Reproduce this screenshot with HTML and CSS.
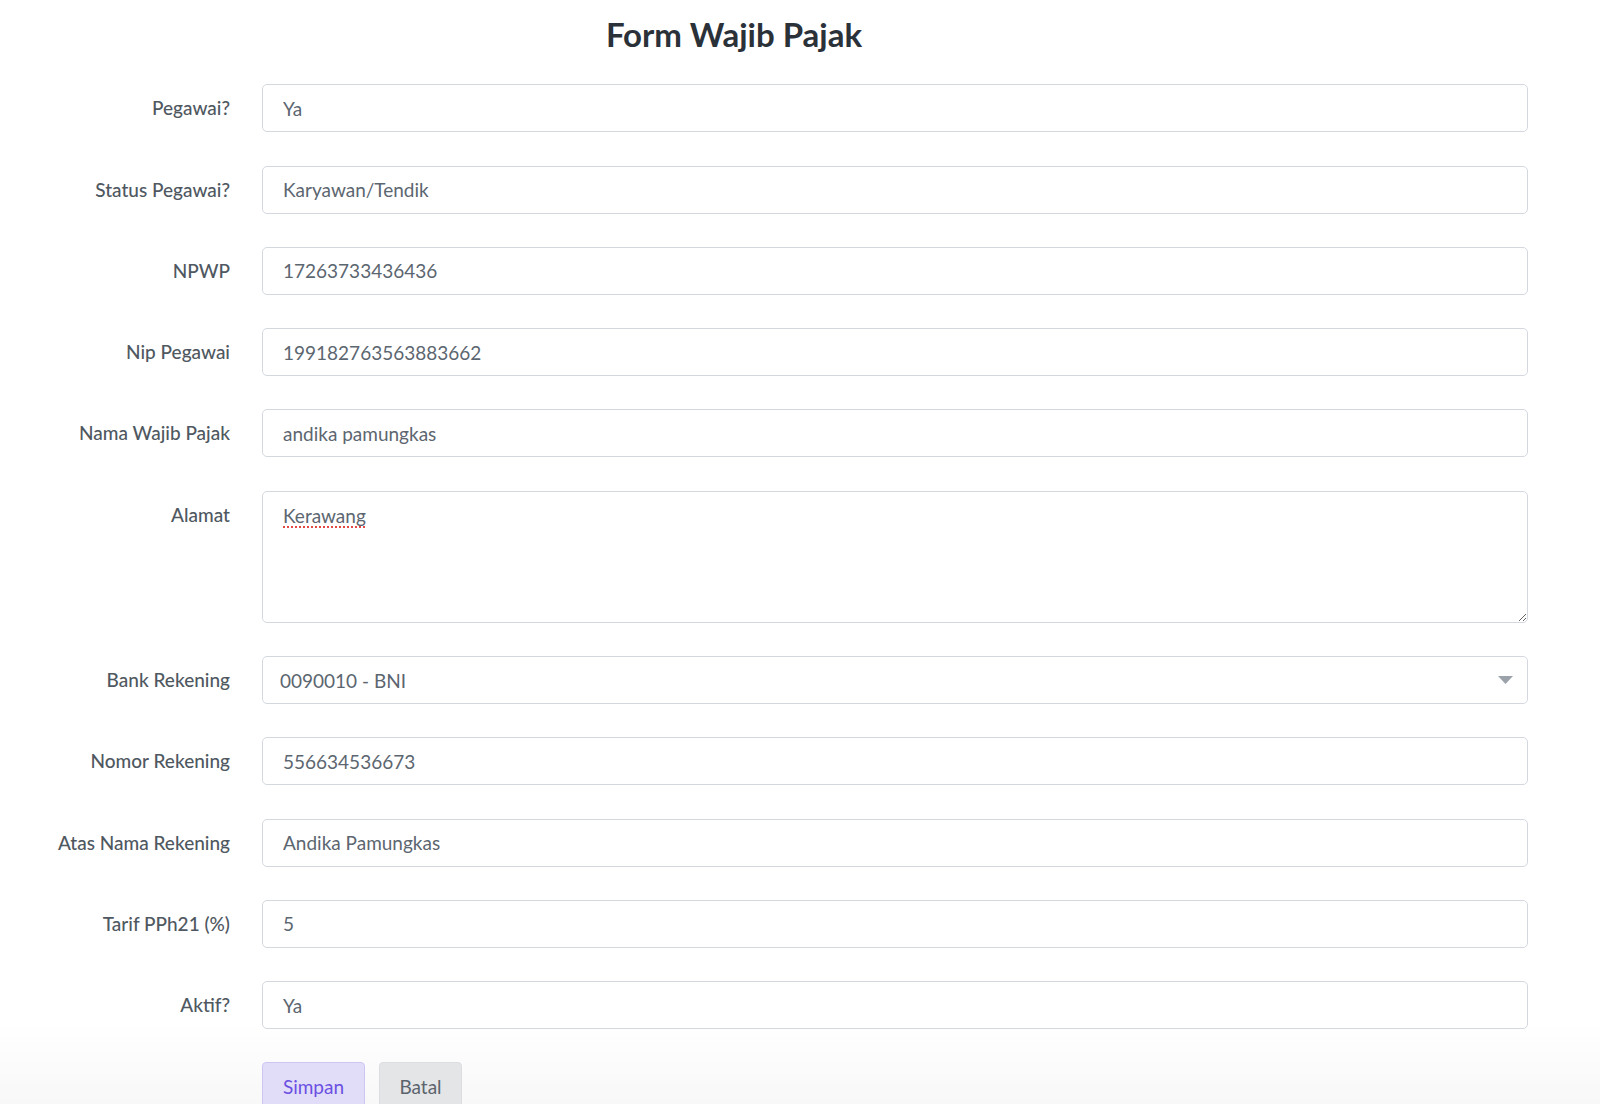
FILE: index.html
```html
<!DOCTYPE html>
<html lang="id">
<head>
    <meta charset="UTF-8">
    <meta name="viewport" content="width=device-width, initial-scale=1.0">
    <title>Form Wajib Pajak</title>
    <link rel="stylesheet" href="styles.css">
</head>
<body>
    <div class="page">
        <h1 class="page-title">Form Wajib Pajak</h1>

        <form class="tax-form">
            <label class="field-label" for="pegawai">Pegawai?</label>
            <input class="field-input" type="text" id="pegawai" value="Ya">

            <label class="field-label" for="statusPegawai">Status Pegawai?</label>
            <input class="field-input" type="text" id="statusPegawai" value="Karyawan/Tendik">

            <label class="field-label" for="npwp">NPWP</label>
            <input class="field-input" type="text" id="npwp" value="17263733436436">

            <label class="field-label" for="nip">Nip Pegawai</label>
            <input class="field-input" type="text" id="nip" value="199182763563883662">

            <label class="field-label" for="nama">Nama Wajib Pajak</label>
            <input class="field-input" type="text" id="nama" value="andika pamungkas">

            <label class="field-label" for="alamat">Alamat</label>
            <textarea class="field-input field-textarea" id="alamat">Kerawang</textarea>

            <label class="field-label" for="bank">Bank Rekening</label>
            <div class="select-wrap">
                <select class="field-input field-select" id="bank">
                    <option>0090010 - BNI</option>
                </select>
                <svg class="select-arrow" width="15" height="8" viewBox="0 0 15 8">
                    <path d="M0 0 L15 0 L7.5 8 Z" fill="#9ca2aa"/>
                </svg>
            </div>

            <label class="field-label" for="nomorRekening">Nomor Rekening</label>
            <input class="field-input" type="text" id="nomorRekening" value="556634536673">

            <label class="field-label" for="atasNama">Atas Nama Rekening</label>
            <input class="field-input" type="text" id="atasNama" value="Andika Pamungkas">

            <label class="field-label" for="tarif">Tarif PPh21 (%)</label>
            <input class="field-input" type="text" id="tarif" value="5">

            <label class="field-label" for="aktif">Aktif?</label>
            <input class="field-input" type="text" id="aktif" value="Ya">
        </form>

        <div class="form-actions">
            <button type="button" class="btn btn-save">Simpan</button>
            <button type="button" class="btn btn-cancel">Batal</button>
        </div>
    </div>
</body>
</html>
```

FILE: styles.css
```css
body {
    margin: 0;
    padding: 0;
    font-family: Lato, "Noto Sans", sans-serif;
    background-color: #ffffff;
    color: #545d66;
}

.page {
    height: 1120px;
    overflow: hidden;
}

.page-title {
    margin: 0;
    padding: 14px 132px 0 0;
    font-size: 33px;
    line-height: 40px;
    font-weight: 700;
    text-align: center;
    color: #2b3139;
}

.tax-form {
    position: relative;
    z-index: 1;
    display: grid;
    grid-template-columns: 230px 1fr;
    column-gap: 32px;
    row-gap: 33.3px;
    padding: 30.3px 72px 0 0;
}

.field-label {
    line-height: 48px;
    font-size: 19px;
    font-weight: 500;
    text-align: right;
    color: #4f5861;
}

.field-input {
    box-sizing: border-box;
    width: 100%;
    height: 48px;
    margin: 0;
    padding: 0 20px;
    border: 1px solid #d4d8de;
    border-radius: 5px;
    background-color: #ffffff;
    font-family: Lato, "Noto Sans", sans-serif;
    font-size: 19px;
    color: #5c6670;
    outline: none;
}

.field-textarea {
    height: 132px;
    padding: 11px 20px;
    line-height: 26px;
    resize: vertical;
    text-decoration: underline dotted #e4403c;
    text-underline-offset: 4px;
}

.select-wrap {
    position: relative;
}

.field-select {
    padding: 0 17px;
    -webkit-appearance: none;
    appearance: none;
}

.select-arrow {
    position: absolute;
    right: 15px;
    top: 20px;
}

.form-actions {
    display: flex;
    gap: 14px;
    height: 83px;
    box-sizing: border-box;
    margin-top: -8px;
    padding: 41px 0 0 262px;
    overflow: hidden;
    background: linear-gradient(#ffffff, #f8f8f9);
}

.btn {
    flex: none;
    height: 48px;
    padding: 0 18px;
    border: 1px solid transparent;
    border-radius: 4px;
    font-family: Lato, "Noto Sans", sans-serif;
    font-size: 19px;
    cursor: pointer;
}

.btn-save {
    width: 103px;
    background-color: #e1ddf9;
    border-color: #cdc6f3;
    color: #6b4fe2;
}

.btn-cancel {
    width: 83px;
    background-color: #e4e5e7;
    border-color: #dcdde0;
    color: #5b636c;
}
```
